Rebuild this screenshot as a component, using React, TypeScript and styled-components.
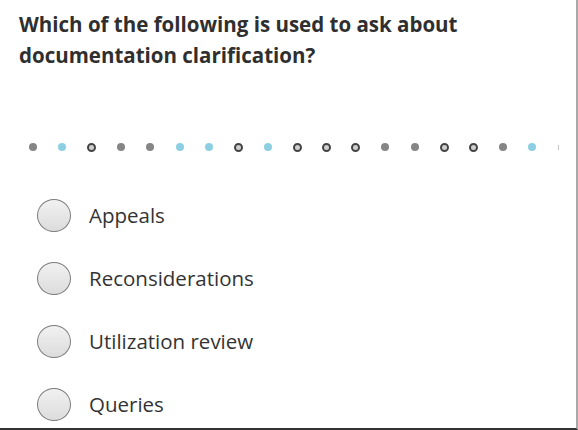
import React from "react";
import styled, { createGlobalStyle } from "styled-components";

const Global = createGlobalStyle`
  html, body { margin: 0; padding: 0; background: #ffffff; }
  body { font-family: "Open Sans", "Noto Sans", sans-serif; }
`;

const Frame = styled.div`
  box-sizing: border-box;
  width: 578px;
  height: 430px;
  background: #ffffff;
  border-right: 2px solid #a9a9a9;
  border-bottom: 2px solid #333333;
  overflow: hidden;
  display: flex;
  flex-direction: column;
`;

const Question = styled.h1`
  margin: 0;
  padding: 9px 0 0 19px;
  font-family: "Open Sans", sans-serif;
  font-weight: 700;
  font-size: 20.5px;
  line-height: 31px;
  color: #2f2f2f;
  width: 480px;
`;

const DotsRow = styled.div`
  display: flex;
  align-items: center;
  padding-left: 18px;
  margin-top: 61px;
  height: 30px;
`;

const DotSlot = styled.div`
  width: 29.4px;
  flex: 0 0 29.4px;
  display: flex;
  align-items: center;
  justify-content: center;
`;

type Kind = "gray" | "blue" | "ring" | "tick";

const Dot = styled.span<{ $kind: Kind }>`
  display: block;
  box-sizing: border-box;
  border-radius: 50%;
  ${(p) =>
    p.$kind === "gray"
      ? `width: 8px; height: 8px; background: #858585;`
      : p.$kind === "blue"
      ? `width: 8px; height: 8px; background: #8dcfe2;`
      : p.$kind === "ring"
      ? `width: 9px; height: 9px; background: #cfcfcf; border: 2.5px solid #444444;`
      : `width: 1px; height: 5px; border-radius: 0; background: #c4c4c4; margin-right: 6px;`}
`;

const Options = styled.ul`
  list-style: none;
  margin: 36px 0 0 0;
  padding: 0 0 0 37px;
  display: flex;
  flex-direction: column;
  gap: 29px;
`;

const Option = styled.li`
  display: flex;
  align-items: center;
  height: 34px;
  gap: 18px;
`;

const Radio = styled.span`
  box-sizing: border-box;
  width: 34px;
  height: 33px;
  border-radius: 50%;
  border: 1.5px solid #7a7a7a;
  background: linear-gradient(#f1f1f1, #dcdcdc);
  flex: 0 0 auto;
`;

const Label = styled.span`
  font-family: "Open Sans", sans-serif;
  font-size: 20.5px;
  color: #333333;
  line-height: 1;
`;

const dots: Kind[] = [
  "gray", "blue", "ring", "gray", "gray", "blue", "blue", "ring", "blue", "ring",
  "ring", "ring", "gray", "gray", "ring", "ring", "gray", "blue", "tick",
];

const answers = ["Appeals", "Reconsiderations", "Utilization review", "Queries"];

export default function App() {
  return (
    <>
      <Global />
      <Frame>
        <Question>Which of the following is used to ask about documentation clarification?</Question>
        <DotsRow>
          {dots.map((k, i) => (
            <DotSlot key={i}>
              <Dot $kind={k} />
            </DotSlot>
          ))}
        </DotsRow>
        <Options>
          {answers.map((a) => (
            <Option key={a}>
              <Radio />
              <Label>{a}</Label>
            </Option>
          ))}
        </Options>
      </Frame>
    </>
  );
}
